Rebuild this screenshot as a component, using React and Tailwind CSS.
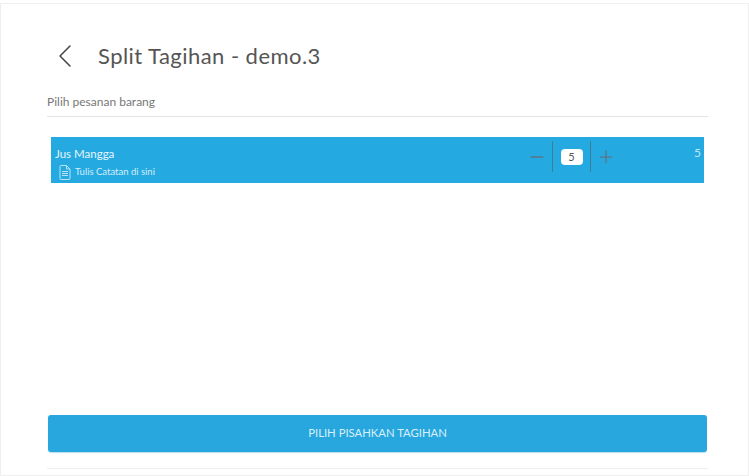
import { ChevronLeft, Minus, Plus } from 'lucide-react';

// Иконка заметки
const NoteIcon = () => (
  <svg width="12" height="15" viewBox="0 0 12 15" fill="none" stroke="#b9e3f6" strokeWidth="1">
    <path d="M1 1.5a1 1 0 0 1 1-1h5.5L11 4v9.5a1 1 0 0 1-1 1H2a1 1 0 0 1-1-1z" />
    <path d="M7.5 .5V4H11M3 6.5h6M3 8.5h6M3 10.5h6" />
  </svg>
);

const OrderRow = () => {
  return (
    <div className="mx-[4px] mt-5 h-[46px] bg-[#25a9e1] flex items-center text-white">
      <div className="flex-1 pl-[4px] pt-[5px]">
        <div className="text-[11.5px] leading-[16px] text-[#e6f5fc]">Jus Mangga</div>
        <div className="flex items-center gap-[4px] mt-[3px] pl-[4px]">
          <NoteIcon />
          <span className="text-[9.5px] leading-[14px] text-[#d5eefa]">Tulis Catatan di sini</span>
        </div>
      </div>
      <div className="flex items-center w-[90px] mr-[74px] mb-[7px] text-[#5d7482]">
        <Minus size={20} strokeWidth={1.8} className="ml-[-3px]" />
        <div className="h-[31px] w-[39px] mx-[5px] border-x border-[#3f7d9c] flex items-center justify-center">
          <span className="w-[22px] h-[16px] bg-white rounded-[4px] text-[11px] leading-[16px] text-center text-[#555]">5</span>
        </div>
        <Plus size={20} strokeWidth={1.5} />
      </div>
      <div className="w-[7px] mr-[3px] mb-[14px] text-[12px] text-[#bfe6f8] leading-none">5</div>
    </div>
  );
};

export default function App() {
  return (
    <div className="w-[749px] h-[476px] bg-white overflow-hidden" style={{ fontFamily: 'Lato, "Noto Sans", sans-serif' }}>
      <div className="h-[473px] mt-[3px] border border-[#efefef] pl-[46px] pr-[40px] flex flex-col">
        <div className="flex items-center h-[40px] mt-[32px]">
          <ChevronLeft size={40} strokeWidth={0.9} className="text-[#444] ml-[-2px]" />
          <h1 className="ml-[13px] text-[22px] leading-[30px] text-[#555] tracking-[0.45px]">Split Tagihan - demo.3</h1>
        </div>
        <div className="mt-[18px] text-[12px] leading-[16px] text-[#777] pb-[6px] border-b border-[#e4e4e4]">Pilih pesanan barang</div>
        <OrderRow />
        <div className="flex-1" />
        <button className="mx-[1px] h-[37px] rounded-[3px] bg-[#28a6de] text-[#d8f0fb] text-[11.3px] shadow-[0_1px_1px_#b5dff3]">PILIH PISAHKAN TAGIHAN</button>
        <div className="mt-[16px] mb-[6px] border-b border-[#eeeeee]" />
      </div>
    </div>
  );
}
